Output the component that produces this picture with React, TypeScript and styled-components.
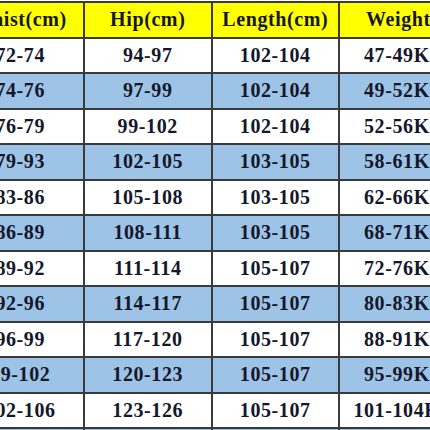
import styled, { createGlobalStyle } from "styled-components";

const GlobalStyle = createGlobalStyle`
  html, body {
    margin: 0;
    padding: 0;
    background: #ffffff;
  }
  body {
    width: 430px;
    height: 430px;
    overflow: hidden;
  }
`;

type Row = [string, string, string, string];

const rows: Row[] = [
  ["72-74", "94-97", "102-104", "47-49KG"],
  ["74-76", "97-99", "102-104", "49-52KG"],
  ["76-79", "99-102", "102-104", "52-56KG"],
  ["79-93", "102-105", "103-105", "58-61KG"],
  ["83-86", "105-108", "103-105", "62-66KG"],
  ["86-89", "108-111", "103-105", "68-71KG"],
  ["89-92", "111-114", "105-107", "72-76KG"],
  ["92-96", "114-117", "105-107", "80-83KG"],
  ["96-99", "117-120", "105-107", "88-91KG"],
  ["99-102", "120-123", "105-107", "95-99KG"],
  ["102-106", "123-126", "105-107", "101-104KG"],
  ["106-110", "126-129", "105-107", "105-108KG"],
];

const headers = ["Waist(cm)", "Hip(cm)", "Length(cm)", "Weight(kg)"];

export default function App() {
  return (
    <>
      <GlobalStyle />
      <Sheet>
        <Table>
          {headers.map((h, i) => (
            <HeaderCell key={h} $left={i === 3}>
              {h}
            </HeaderCell>
          ))}
          {rows.map((row, r) =>
            row.map((value, c) => (
              <Cell key={`${r}-${c}`} $shaded={r % 2 === 1}>
                {value}
              </Cell>
            ))
          )}
        </Table>
      </Sheet>
    </>
  );
}

const Sheet = styled.div`
  width: 430px;
  height: 430px;
  overflow: hidden;
  padding-top: 1px;
  box-sizing: border-box;
`;

const Table = styled.div`
  display: grid;
  grid-template-columns: 125.5px 125.5px 125.5px 130px;
  grid-auto-rows: 33.5px;
  gap: 2px;
  margin-left: -42.5px;
  width: max-content;
  border-top: 2px solid #3a3a3a;
  background: #3a3a3a;
  font-family: "Liberation Serif", "DejaVu Serif", serif;
  font-weight: 700;
  font-size: 20px;
  letter-spacing: 0.6px;
  color: #15172a;
`;

const Cell = styled.div<{ $shaded: boolean }>`
  display: flex;
  align-items: center;
  justify-content: center;
  white-space: nowrap;
  overflow: hidden;
  background: ${(p) => (p.$shaded ? "#9dc3e6" : "#ffffff")};
`;

const HeaderCell = styled.div<{ $left: boolean }>`
  display: flex;
  align-items: center;
  justify-content: ${(p) => (p.$left ? "flex-start" : "center")};
  padding-left: ${(p) => (p.$left ? "26px" : "0")};
  white-space: nowrap;
  overflow: hidden;
  background: #ffff00;
`;
